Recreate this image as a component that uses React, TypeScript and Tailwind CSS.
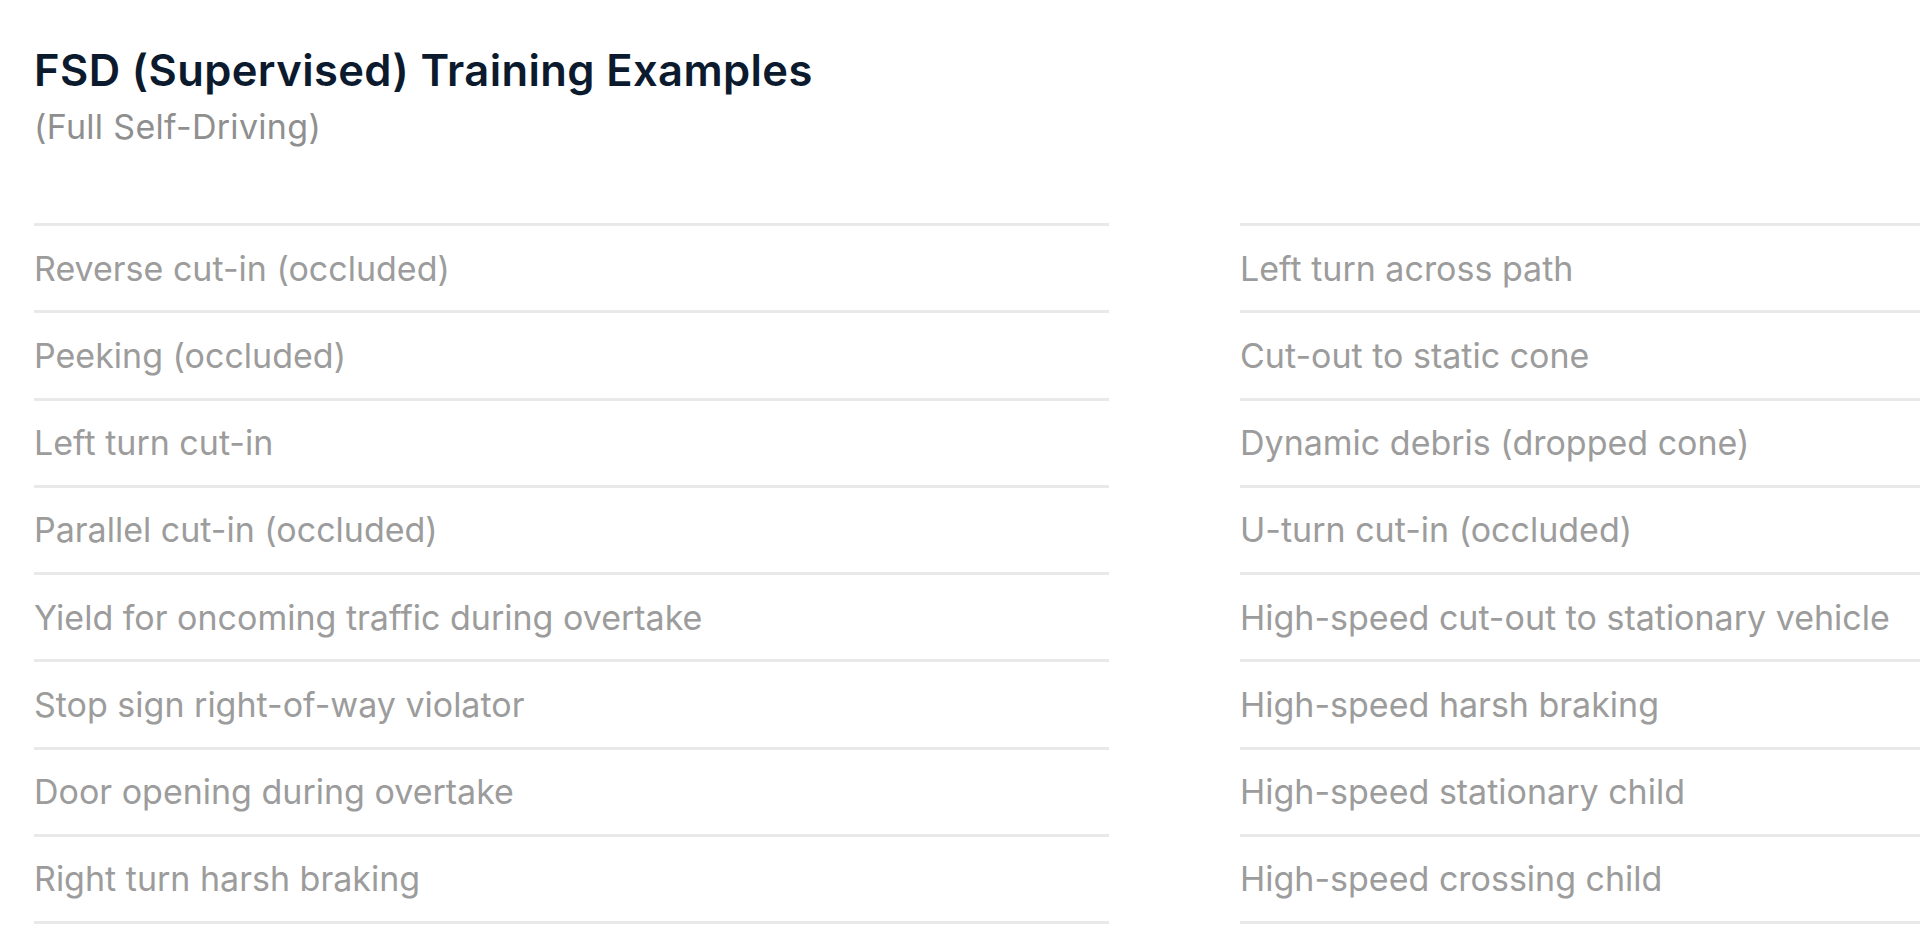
const left = [
  "Reverse cut-in (occluded)",
  "Peeking (occluded)",
  "Left turn cut-in",
  "Parallel cut-in (occluded)",
  "Yield for oncoming traffic during overtake",
  "Stop sign right-of-way violator",
  "Door opening during overtake",
  "Right turn harsh braking",
];

const right = [
  "Left turn across path",
  "Cut-out to static cone",
  "Dynamic debris (dropped cone)",
  "U-turn cut-in (occluded)",
  "High-speed cut-out to stationary vehicle",
  "High-speed harsh braking",
  "High-speed stationary child",
  "High-speed crossing child",
];

function Column({ items }: { items: string[] }) {
  return (
    <ul className="border-t-[3px] border-[#e9e9e9]">
      {items.map((item) => (
        <li
          key={item}
          className="flex h-[87.25px] items-center border-b-[3px] border-[#e9e9e9] text-[34px] text-[#9c9c9c]"
        >
          {item}
        </li>
      ))}
    </ul>
  );
}

export default function App() {
  return (
    <div className="h-[939px] w-[1920px] overflow-hidden bg-white font-['Inter',sans-serif]">
      <div className="pl-[34px] pt-[45px]">
        <h1 className="text-[43.5px] font-semibold leading-[50px] tracking-[0.4px] text-[#0c1a2e]">
          FSD (Supervised) Training Examples
        </h1>
        <p className="mt-[12px] text-[34px] leading-[40px] tracking-[0.3px] text-[#8f8f8f]">
          (Full Self-Driving)
        </p>

        <div className="mt-[76px] grid w-[2400px] grid-cols-[1075px_1075px] gap-x-[131px]">
          <Column items={left} />
          <Column items={right} />
        </div>
      </div>
    </div>
  );
}
